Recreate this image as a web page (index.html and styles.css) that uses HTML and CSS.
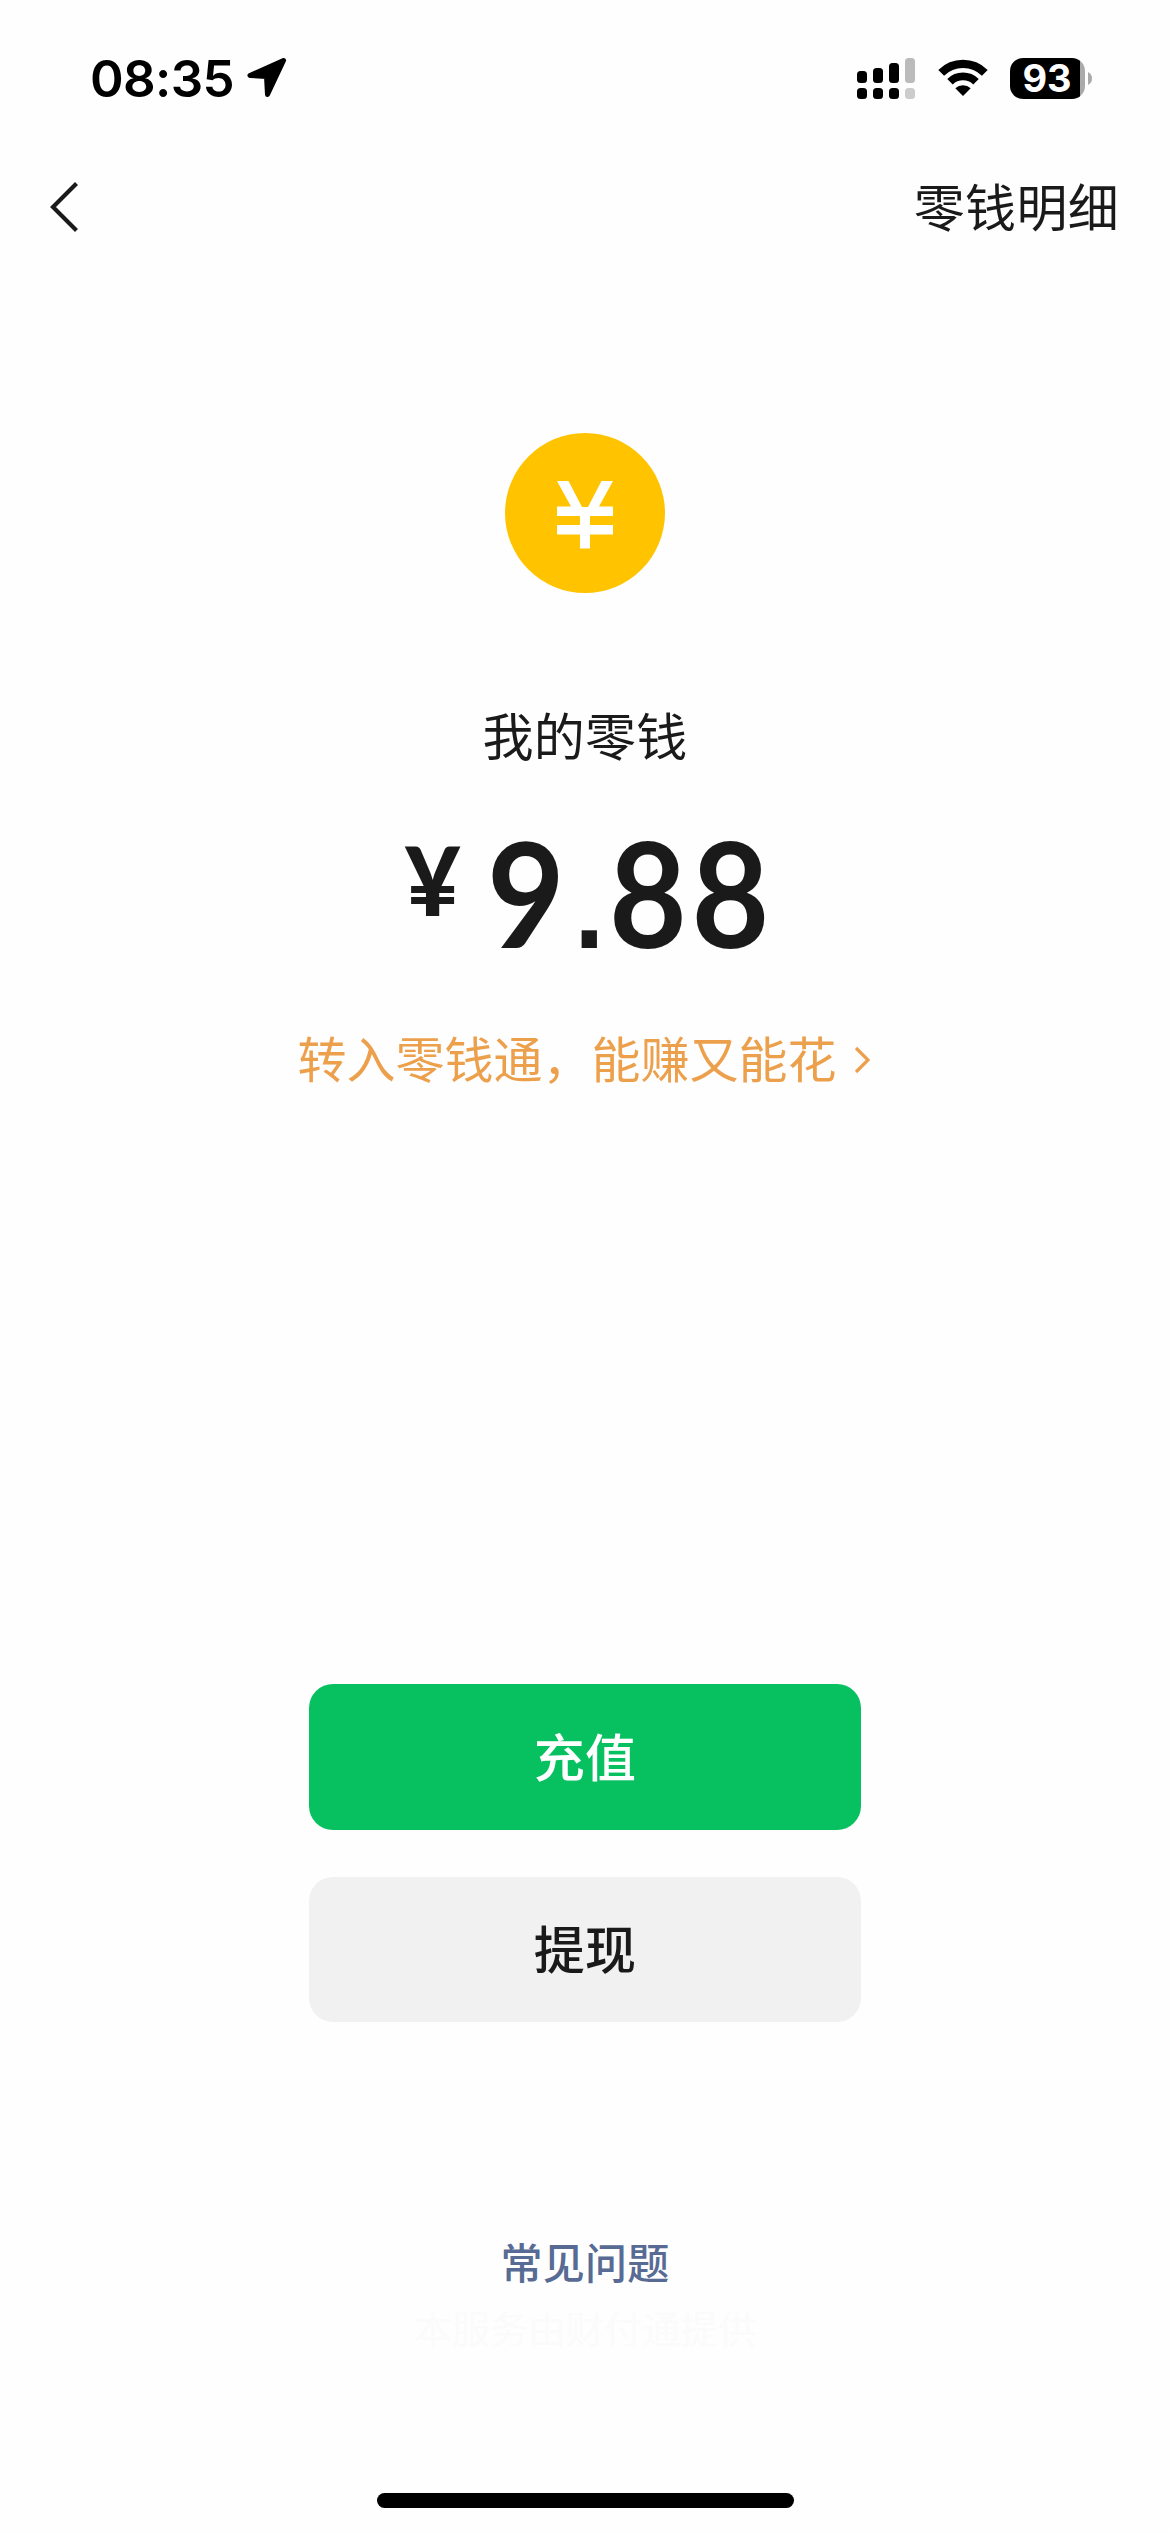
FILE: index.html
```html
<!DOCTYPE html>
<html lang="zh-CN">
<head>
<meta charset="utf-8">
<title>我的零钱</title>
<link rel="stylesheet" href="styles.css">
</head>
<body>
<div class="screen">
  <header class="status-bar">
    <div class="status-left">
      <span class="time">08:35</span>
      <svg class="location" width="40" height="40" viewBox="0 0 40 40"><path d="M36.500 2.500 L3 17.500 L19.500 18.500 L20.500 36.500 Z" fill="#000" stroke="#000" stroke-width="5" stroke-linejoin="round"/></svg>
    </div>
    <div class="status-right">
      <svg class="signal" width="58" height="41" viewBox="0 0 58 41">
        <rect x="0" y="13" width="10" height="12" rx="3.500"/><rect x="16" y="10" width="10" height="15" rx="3.500"/><rect x="32" y="5" width="10" height="20" rx="3.500"/><rect x="48" y="0" width="10" height="25" rx="3.500" fill="#bbb"/>
        <rect x="0" y="30" width="10" height="11" rx="3.500"/><rect x="16" y="30" width="10" height="11" rx="3.500"/><rect x="32" y="30" width="10" height="11" rx="3.500"/><rect x="48" y="30" width="10" height="11" rx="3.500" fill="#ccc"/>
      </svg>
      <svg class="wifi" width="50" height="38" viewBox="0 0 50 38">
        <path d="M3.200 13.800 A31 31 0 0 1 46.800 13.800" fill="none" stroke="#000" stroke-width="8.200"/>
        <path d="M12 22.700 A18.500 18.500 0 0 1 38 22.700" fill="none" stroke="#000" stroke-width="7.800"/>
        <path d="M17.300 29.200 A11.500 11.500 0 0 1 32.700 29.200 L25 37 Z"/>
      </svg>
      <div class="battery"><div class="battery-body">93</div><svg width="4" height="13" viewBox="0 0 4 13"><path d="M0 0 Q4 2 4 6.500 Q4 11 0 13Z" fill="#aaa"/></svg></div>
    </div>
  </header>
  <nav class="nav-bar">
    <svg class="back" width="30" height="52" viewBox="0 0 30 52"><path d="M27.500 2.500 L4 26 L27.500 49.500" fill="none" stroke="#1a1a1a" stroke-width="4.200"/></svg>
    <span class="nav-link">零钱明细</span>
  </nav>
  <main class="content">
    <svg class="coin" width="160" height="160" viewBox="0 0 160 160"><circle cx="80" cy="80" r="80" fill="#ffc300"/><path d="M52 48 H63.500 L77 74 H83 L96.500 48 H108 L94 73.500 H108 V83 H85 V92 H108 V101.500 H85 V115.500 H75 V101.500 H52 V92 H75 V83 H52 V73.500 H66 Z" fill="#fff"/></svg>
    <h1 class="title">我的零钱</h1>
    <div class="amount"><span class="currency">¥</span><span class="digits">9<span class="point">.</span>88</span></div>
    <a class="promo">转入零钱通，能赚又能花<svg class="chevron" width="17" height="28" viewBox="0 0 17 28"><path d="M2 2 L14 14 L2 26" fill="none" stroke="#eda04c" stroke-width="3.200"/></svg></a>
    <div class="actions">
      <button class="button primary">充值</button>
      <button class="button secondary">提现</button>
    </div>
    <a class="faq">常见问题</a>
    <p class="provider">本服务由财付通提供</p>
  </main>
  <div class="home-indicator"></div>
</div>
</body>
</html>
```

FILE: styles.css
```css
* { box-sizing: border-box; }
body { margin: 0; background: #fefefe; }
.screen {
  width: 1170px;
  height: 2532px;
  display: flex;
  flex-direction: column;
  background: #fefefe;
  color: #1a1a1a;
  font-family: "Noto Sans CJK SC", sans-serif;
}
svg { display: block; flex: none; }
.status-bar {
  height: 156px;
  padding: 0 78px 0 90px;
  display: flex;
  justify-content: space-between;
  align-items: center;
  color: #000;
}
.status-left { display: flex; align-items: center; gap: 13px; }
.time { font: 600 51px/60px Inter, sans-serif; letter-spacing: -0.6px; padding-top: 1px; }
.status-right { display: flex; align-items: center; }
.wifi { margin-left: 23px; }
.battery { display: flex; align-items: center; gap: 3px; margin-left: 22px; }
.battery-body {
  width: 75px;
  height: 41px;
  padding-right: 1px;
  border-radius: 13px;
  background: linear-gradient(90deg, #000 70px, #aaa 70px);
  color: #fff;
  font: 700 38px/41px Inter, sans-serif;
  text-align: center;
}
.nav-bar {
  height: 104px;
  padding: 0 51px 2px 49px;
  display: flex;
  align-items: center;
  justify-content: space-between;
}
.nav-link { font-size: 51px; line-height: 60px; letter-spacing: 0.3px; padding-bottom: 4px; }
.content { flex: 1; display: flex; flex-direction: column; align-items: center; }
.coin { margin-top: 173px; }
.title { margin: 111px 0 2px; font-size: 51px; font-weight: 400; line-height: 60px; letter-spacing: 0.3px; }
.amount { height: 140px; margin-top: 56px; padding-left: 8px; display: flex; align-items: flex-start; }
.currency { font: 900 96px/114px Lato, sans-serif; margin-right: 27px; }
.digits {
  width: 286px;
  font: 700 146px/140px Lato, sans-serif;
  letter-spacing: 5px;
  white-space: nowrap;
  transform: scaleX(0.92);
  transform-origin: left;
}
.point {
  display: inline-block;
  width: 43px;
  font: 700 118px/138px "Liberation Sans", sans-serif;
  letter-spacing: 0;
  text-align: center;
}
.promo {
  height: 60px;
  margin-top: 65px;
  padding-right: 2px;
  display: flex;
  align-items: center;
  gap: 17px;
  color: #eda04c;
  font-size: 49px;
  font-weight: 400;
  line-height: 60px;
}
.chevron { margin-top: 5px; }
.actions { margin-top: 597px; display: flex; flex-direction: column; gap: 47px; }
.button {
  width: 552px;
  height: 145px;
  padding: 0 0 5px;
  border: 0;
  border-radius: 24px;
  font: 500 51px/60px "Noto Sans CJK SC", sans-serif;
  letter-spacing: 0.3px;
}
.primary { height: 146px; background: #07c160; color: #fff; }
.secondary { background: #f1f1f1; color: #1a1a1a; }
.faq { margin-top: 209px; color: #576b95; font-size: 42px; font-weight: 500; line-height: 60px; letter-spacing: 0.3px; }
.provider { margin: 8px 0 0; color: #fbfbfb; font-size: 38px; line-height: 56px; }
.home-indicator { width: 417px; height: 15px; margin: 0 auto 24px; border-radius: 8px; background: #000; }
```
